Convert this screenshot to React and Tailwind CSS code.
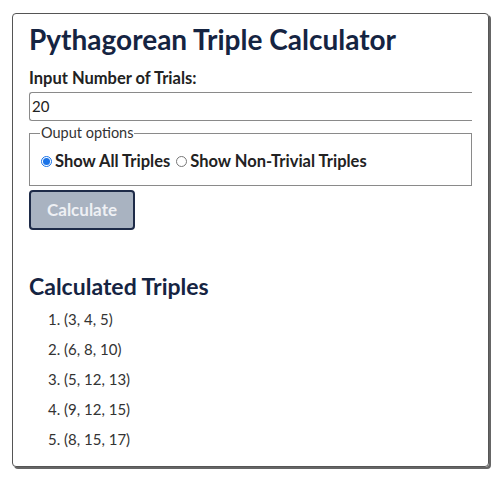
const triples = ['(3, 4, 5)', '(6, 8, 10)', '(5, 12, 13)', '(9, 12, 15)', '(8, 15, 17)'];

export default function App() {
  return (
    <div className="w-[500px] h-[478px] bg-white pt-[13px] pl-[12px] font-['Lato','Liberation_Sans',sans-serif]">
      <div className="w-[477px] h-[454px] border border-[#555] rounded-[4px] shadow-[2px_2px_0_#666] px-[16px] pt-[7px] overflow-hidden">
        <h1 className="text-[28px] leading-[36px] font-bold text-[#152442]">Pythagorean Triple Calculator</h1>

        <label className="block mt-[11px] text-[16.5px] leading-[20px] font-bold text-[#222]">Input Number of Trials:</label>
        <div className="mt-[4px] h-[29px] border border-r-0 border-[#8a8a8a] rounded-l-[3px] flex items-center px-[2px] text-[15px] text-[#222]">20</div>

        <fieldset className="mt-[4px] h-[61px] border border-[#8a8a8a] px-[11px]">
          <legend className="px-[1px] text-[14.5px] leading-[16px] text-[#333] ml-[-1px]">Ouput options</legend>
          <div className="flex items-center mt-[8px] text-[16.5px] font-bold text-[#222]">
            <span className="w-[11px] h-[11px] rounded-full border border-[#1a73e8] flex items-center justify-center">
              <span className="w-[7px] h-[7px] rounded-full bg-[#1a73e8]" />
            </span>
            <span className="ml-[3px]">Show All Triples</span>
            <span className="ml-[6px] w-[11px] h-[11px] rounded-full border border-[#777]" />
            <span className="ml-[3px]">Show Non-Trivial Triples</span>
          </div>
        </fieldset>

        <button className="mt-[4px] w-[106px] h-[40px] rounded-[4px] border-2 border-[#1e2b48] bg-[#a9b3c1] text-[17px] font-bold text-[#eef0f4]">Calculate</button>

        <h2 className="mt-[41px] text-[23px] leading-[30px] font-bold text-[#152442]">Calculated Triples</h2>
        <ol className="mt-[8px] pl-[19px] text-[15px] text-[#333]">
          {triples.map((t, i) => (
            <li key={t} className="h-[30px] leading-[20px]">{i + 1}. {t}</li>
          ))}
        </ol>
      </div>
    </div>
  );
}
